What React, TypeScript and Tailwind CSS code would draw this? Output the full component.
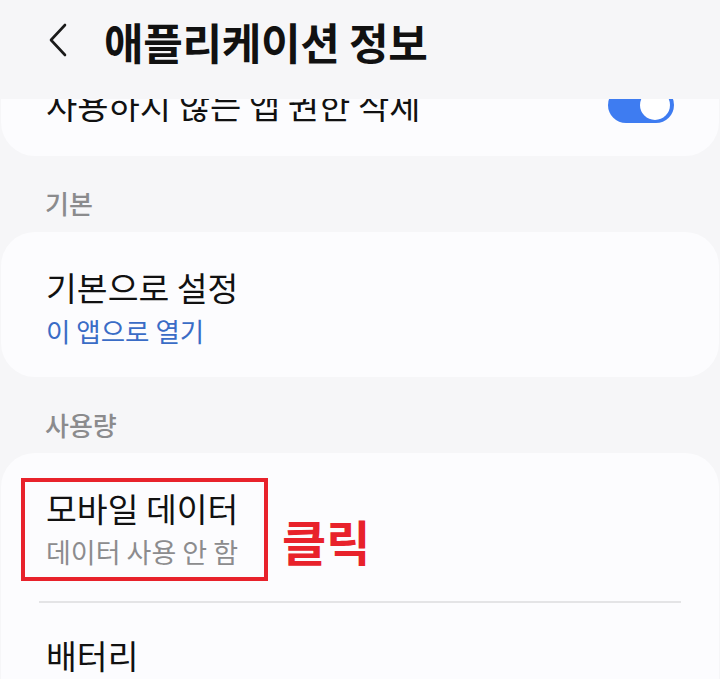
const font = { fontFamily: '"Noto Sans CJK KR", "Noto Sans", sans-serif' }

function Chevron() {
  return (
    <svg width="24" height="34" viewBox="0 0 24 34" fill="none" className="shrink-0">
      <path d="M19 2 L5 17 L19 32" stroke="#1a1a1a" strokeWidth="2.6" strokeLinecap="round" strokeLinejoin="round" />
    </svg>
  )
}

function Toggle() {
  return (
    <div className="relative w-[66px] h-[36px] rounded-full bg-[#3e7cf1] shrink-0">
      <div className="absolute right-[4px] top-[3px] w-[30px] h-[30px] rounded-full bg-white" />
    </div>
  )
}

export default function App() {
  return (
    <div className="w-[720px] h-[679px] overflow-hidden bg-[#f6f6f8] text-[#111]" style={font}>
      {/* header */}
      <div className="relative z-10 h-[99px] flex items-start pt-[23px] pl-[46px] bg-[#f6f6f8]">
        <Chevron />
        <h1 className="ml-[34px] -mt-[2px] text-[43px] leading-[40px] font-bold tracking-[-0.3px]">애플리케이션 정보</h1>
      </div>

      {/* scrolled card, clipped under header */}
      <div className="-mt-[33px]">
        <div className="h-[90px] mx-[1px] rounded-[34px] bg-[#fcfcfe] flex items-center justify-between pl-[45px] pr-[45px] pb-[12px]">
          <span className="text-[34px] leading-[40px]">사용하지 않는 앱 권한 삭제</span>
          <Toggle />
        </div>
      </div>

      <div className="pt-[33px] pb-[15px] pl-[45px] text-[26px] leading-[28px] text-[#8b8b8d] font-medium">기본</div>

      <div className="h-[145px] mx-[1px] rounded-[34px] bg-[#fcfcfe] pl-[45px] pt-[35px]">
        <div className="text-[33.5px] leading-[40px]">기본으로 설정</div>
        <div className="mt-[7px] text-[26.5px] leading-[34px] text-[#3a6cc6]">이 앱으로 열기</div>
      </div>

      <div className="pt-[34px] pb-[14px] pl-[45px] text-[26px] leading-[28px] text-[#8b8b8d] font-medium">사용량</div>

      <div className="relative mx-[1px] rounded-t-[34px] bg-[#fcfcfe] h-[240px]">
        <div className="pl-[45px] pt-[35px] h-[148px]">
          <div className="text-[33.5px] leading-[40px]">모바일 데이터</div>
          <div className="mt-[7px] text-[27px] leading-[34px] text-[#8c8c8e]">데이터 사용 안 함</div>
        </div>
        <div className="mx-[38px] h-[2px] bg-[#e4e4e6]" />
        <div className="pl-[45px] pt-[32px] text-[33.5px] leading-[40px]">배터리</div>

        {/* annotation */}
        <div className="absolute left-[20px] top-[25px] w-[247px] h-[103px] border-[4px] border-[#e8222b]" />
        <div className="absolute left-[281px] top-[59px] text-[48px] leading-[56px] font-bold text-[#e8222b]">클릭</div>
      </div>
    </div>
  )
}
